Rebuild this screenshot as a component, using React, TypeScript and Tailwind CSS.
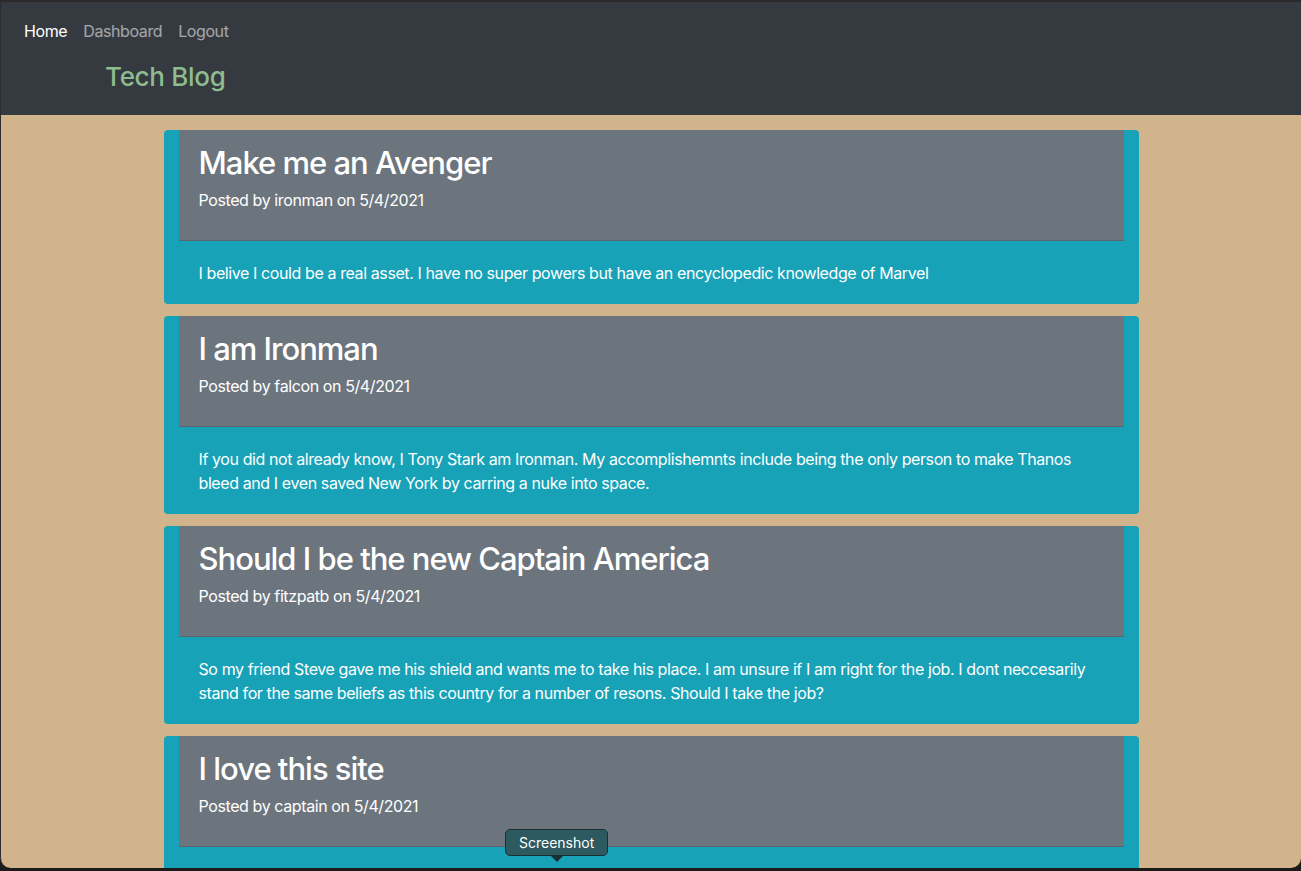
const posts = [
  {
    title: "Make me an Avenger",
    user: "ironman",
    date: "5/4/2021",
    body: "I belive I could be a real asset. I have no super powers but have an encyclopedic knowledge of Marvel",
  },
  {
    title: "I am Ironman",
    user: "falcon",
    date: "5/4/2021",
    body: "If you did not already know, I Tony Stark am Ironman. My accomplishemnts include being the only person to make Thanos bleed and I even saved New York by carring a nuke into space.",
  },
  {
    title: "Should I be the new Captain America",
    user: "fitzpatb",
    date: "5/4/2021",
    body: "So my friend Steve gave me his shield and wants me to take his place. I am unsure if I am right for the job. I dont neccesarily stand for the same beliefs as this country for a number of resons. Should I take the job?",
  },
  {
    title: "I love this site",
    user: "captain",
    date: "5/4/2021",
    body: "This is the best place to talk about tech with my fellow heroes.",
  },
];

const PostCard = ({ post }: { post: (typeof posts)[number] }) => {
  return (
    <div className="bg-[#17a2b8] rounded-[4px] text-white">
      <div className="mx-[15px] bg-[#6c757d] px-5 pt-[14px] pb-3 border-b border-[#5c636a]">
        <h2 className="text-[31px] leading-[38px] tracking-[-1px] font-medium mb-[6px]">{post.title}</h2>
        <p className="text-base leading-6 tracking-[-0.4px] mb-4">
          Posted by {post.user} on {post.date}
        </p>
      </div>
      <div className="px-[35px] pt-5 pb-[19px] text-base leading-6 tracking-[-0.4px]">
        <p>{post.body}</p>
      </div>
    </div>
  );
};

export default function App() {
  return (
    <div
      className="h-[871px] w-[1301px] bg-[#1b1b1b] overflow-hidden relative"
      style={{ fontFamily: "Inter, 'Noto Sans', sans-serif" }}
    >
      <div className="h-[868px] bg-[#d2b48c] rounded-b-[10px] overflow-hidden border-t-2 border-[#2a2a2a] border-l border-l-[#2d2d2d]">
        {/* Navbar */}
        <nav className="bg-[#343a40] h-[113px] px-4 pt-[9px]">
          <ul className="flex text-base leading-6 tracking-[-0.4px]">
            <li className="px-2 py-2 text-white -ml-px">Home</li>
            <li className="px-2 py-2 text-white/55">Dashboard</li>
            <li className="px-2 py-2 text-white/55">Logout</li>
          </ul>
          <h1 className="pl-[88px] pt-[10px] text-[26px] leading-8 tracking-[-0.3px] font-medium text-[#8fbc8f]">
            Tech Blog
          </h1>
        </nav>

        {/* Posts */}
        <main className="w-[975px] mx-auto pt-[15px] flex flex-col gap-3">
          {posts.map((post, index) => (
            <PostCard key={index} post={post} />
          ))}
        </main>
      </div>

      {/* macOS tooltip overlay */}
      <div className="absolute left-[505px] top-[829px] flex flex-col items-center">
        <div className="bg-[#2c5a60] border border-[#1a2f33] rounded-[5px] px-[13px] h-[27px] flex items-center text-[14px] text-white">
          Screenshot
        </div>
        <div className="w-0 h-0 border-l-[7px] border-r-[7px] border-t-[7px] border-l-transparent border-r-transparent border-t-[#1a2f33] -mt-px" />
      </div>
    </div>
  );
}
